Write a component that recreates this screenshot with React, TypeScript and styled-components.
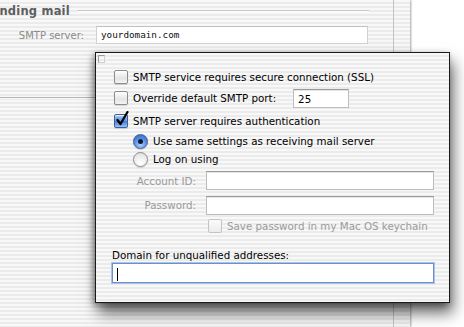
import styled, { createGlobalStyle, css } from 'styled-components'

const GlobalStyle = createGlobalStyle`
  html, body {
    margin: 0;
    padding: 0;
    background: #ffffff;
  }
  body {
    font-family: 'DejaVu Sans', 'Liberation Sans', sans-serif;
    font-size: 10.3px;
    color: #000;
  }
`

const pinstripe = css`
  background: repeating-linear-gradient(
    to bottom,
    #f8f8f8 0px,
    #f8f8f8 2px,
    #ebebeb 2px,
    #ebebeb 4px
  );
`

const Desktop = styled.div`
  position: relative;
  width: 464px;
  height: 327px;
  overflow: hidden;
  background: #ffffff;
`

// window behind, inactive
const BackWindow = styled.div`
  display: flex;
  width: 410px;
  height: 327px;
  ${pinstripe};
  box-shadow: 1px 0 2px rgba(0, 0, 0, 0.35);
`

const BackPane = styled.div`
  width: 393px;
  border-right: 1px solid #c4c4c4;
  display: flex;
  flex-direction: column;
`

const GroupHead = styled.div`
  display: flex;
  align-items: center;
  height: 22px;
  margin-left: -17px;
  padding-right: 24px;
`

const GroupTitle = styled.span`
  font-weight: bold;
  font-size: 11.5px;
  color: #5e5e5e;
  letter-spacing: 0.2px;
`

const GroupLine = styled.div`
  flex: 1;
  margin-left: 7px;
  height: 1px;
  background: #c8c8c8;
  border-bottom: 1px solid #fdfdfd;
`

const FieldRow = styled.div`
  display: flex;
  align-items: center;
  height: 22px;
  margin-top: 2px;
`

const BackLabel = styled.span`
  width: 84px;
  text-align: right;
  color: #8a8a8a;
  font-size: 10px;
  margin-right: 12px;
`

const MonoField = styled.div`
  width: 272px;
  height: 18px;
  box-sizing: border-box;
  background: #fff;
  border: 1px solid #d2d2d2;
  border-top-color: #c0c0c0;
  font-family: 'DejaVu Sans Mono', 'Liberation Mono', monospace;
  font-size: 9.3px;
  padding: 2px 0 0 4px;
  color: #111;
`

const BackRule = styled.div`
  margin-top: 51px;
  height: 1px;
  background: #b4b4b4;
  border-bottom: 1px solid #fafafa;
`

// sheet in front
const Sheet = styled.div`
  position: absolute;
  left: 95px;
  top: 52px;
  width: 353px;
  height: 249px;
  border: 1px solid #1a1a1a;
  ${pinstripe};
  box-shadow: 3px 10px 14px rgba(0, 0, 0, 0.6), -2px 2px 6px rgba(0, 0, 0, 0.35);
  display: flex;
  flex-direction: column;
`

const Corner = styled.div`
  width: 5px;
  height: 6px;
  margin: 2px 0 0 2px;
  border: 1px solid #9a9a9a;
  border-right-color: #d0d0d0;
  border-bottom-color: #d0d0d0;
`

const Row = styled.div<{ $h: number; $indent: number }>`
  display: flex;
  align-items: center;
  height: ${(p) => p.$h}px;
  padding-left: ${(p) => p.$indent}px;
  flex-shrink: 0;
`

const Label = styled.span<{ $dim?: boolean }>`
  color: ${(p) => (p.$dim ? '#9a9a9a' : '#000')};
  white-space: nowrap;
`

const Box = styled.span<{ $on?: boolean; $dim?: boolean }>`
  position: relative;
  width: 12px;
  height: 12px;
  border-radius: 2px;
  margin-right: 5px;
  flex-shrink: 0;
  border: 1px solid ${(p) => (p.$on ? '#3b5f95' : p.$dim ? '#c4c4c4' : '#8c8c8c')};
  background: ${(p) =>
    p.$on
      ? 'linear-gradient(#a9c8f2, #5d92e0 50%, #3f7ad6 55%, #9cc3f4)'
      : p.$dim
        ? 'linear-gradient(#fbfbfb, #ececec)'
        : 'linear-gradient(#ffffff, #e4e4e4 60%, #f4f4f4)'};
  box-shadow: ${(p) => (p.$dim ? 'none' : 'inset 0 1px 1px rgba(255,255,255,0.8), 0 1px 1px rgba(0,0,0,0.15)')};
`

const Tick = styled.svg`
  position: absolute;
  left: 1px;
  top: -4px;
`

const Radio = styled.span<{ $on?: boolean }>`
  position: relative;
  width: 13px;
  height: 13px;
  border-radius: 50%;
  margin-right: 5px;
  flex-shrink: 0;
  border: 1px solid ${(p) => (p.$on ? '#3b5f95' : '#8c8c8c')};
  background: ${(p) =>
    p.$on
      ? 'radial-gradient(circle at 50% 75%, #a9d0ff, #4f86dc 60%, #2f66c2)'
      : 'radial-gradient(circle at 50% 80%, #ffffff, #ececec 60%, #d8d8d8)'};
  box-shadow: 0 1px 1px rgba(0, 0, 0, 0.15);
  display: flex;
  align-items: center;
  justify-content: center;
`

const Dot = styled.span`
  width: 5px;
  height: 5px;
  border-radius: 50%;
  background: #0d1a33;
`

const Input = styled.div<{ $w?: number; $focus?: boolean }>`
  box-sizing: border-box;
  width: ${(p) => (p.$w ? `${p.$w}px` : 'auto')};
  flex: ${(p) => (p.$w ? '0 0 auto' : '1')};
  height: ${(p) => (p.$focus ? 20 : 19)}px;
  background: #fff;
  border: 1px solid ${(p) => (p.$focus ? '#6f8fc6' : '#bdbdbd')};
  border-top-color: ${(p) => (p.$focus ? '#6f8fc6' : '#9a9a9a')};
  box-shadow: ${(p) => (p.$focus ? '0 0 0 1px #a9c2e8' : 'inset 0 1px 0 #e6e6e6')};
  padding: 2px 4px 0;
  display: flex;
  align-items: center;
`

const Caret = styled.span`
  width: 1px;
  height: 13px;
  background: #000;
`

const FormLabel = styled.span`
  width: 110px;
  text-align: right;
  color: #9a9a9a;
  padding-right: 10px;
  box-sizing: border-box;
  flex-shrink: 0;
`

const Check = ({ on, dim }: { on?: boolean; dim?: boolean }) => (
  <Box $on={on} $dim={dim}>
    {on && (
      <Tick width="13" height="15" viewBox="0 0 13 15">
        <path d="M1.5 9 L4.5 13 L11.5 1" stroke="#000" strokeWidth="2.2" fill="none" strokeLinecap="round" strokeLinejoin="round" />
      </Tick>
    )}
  </Box>
)

export default function App() {
  return (
    <>
      <GlobalStyle />
      <Desktop>
        <BackWindow>
          <BackPane>
            <GroupHead>
              <GroupTitle>Sending mail</GroupTitle>
              <GroupLine />
            </GroupHead>
            <FieldRow>
              <BackLabel>SMTP server:</BackLabel>
              <MonoField>yourdomain.com</MonoField>
            </FieldRow>
            <BackRule />
          </BackPane>
        </BackWindow>

        <Sheet>
          <Corner />
          <Row $h={20} $indent={18} style={{ marginTop: 4 }}>
            <Check />
            <Label>SMTP service requires secure connection (SSL)</Label>
          </Row>
          <Row $h={22} $indent={18}>
            <Check />
            <Label>Override default SMTP port:</Label>
            <Input $w={56} style={{ marginLeft: 17 }}>
              <Label>25</Label>
            </Input>
          </Row>
          <Row $h={23} $indent={18}>
            <Check on />
            <Label>SMTP server requires authentication</Label>
          </Row>
          <Row $h={18} $indent={37}>
            <Radio $on>
              <Dot />
            </Radio>
            <Label>Use same settings as receiving mail server</Label>
          </Row>
          <Row $h={18} $indent={37}>
            <Radio />
            <Label>Log on using</Label>
          </Row>
          <Row $h={25} $indent={0} style={{ paddingRight: 15 }}>
            <FormLabel>Account ID:</FormLabel>
            <Input />
          </Row>
          <Row $h={24} $indent={0} style={{ paddingRight: 15 }}>
            <FormLabel>Password:</FormLabel>
            <Input />
          </Row>
          <Row $h={18} $indent={112}>
            <Check dim />
            <Label $dim>Save password in my Mac OS keychain</Label>
          </Row>
          <Row $h={14} $indent={16} style={{ marginTop: 13 }}>
            <Label>Domain for unqualified addresses:</Label>
          </Row>
          <Row $h={22} $indent={16} style={{ paddingRight: 15 }}>
            <Input $focus>
              <Caret />
            </Input>
          </Row>
        </Sheet>
      </Desktop>
    </>
  )
}
